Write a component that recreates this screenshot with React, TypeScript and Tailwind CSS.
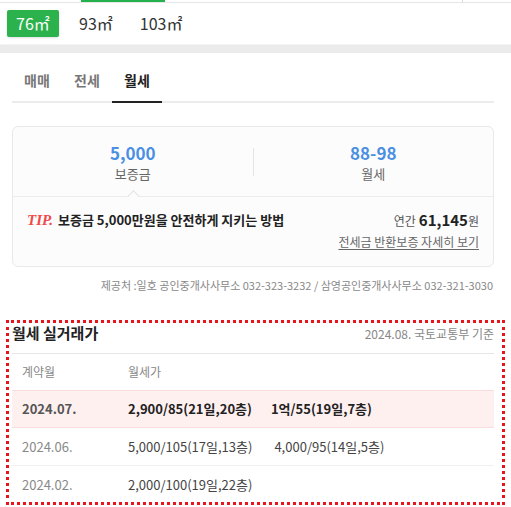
import React from 'react';

const font = { fontFamily: '"Noto Sans CJK KR", "Noto Sans", sans-serif' };

const AreaTabs: React.FC = () => (
  <div className="flex items-start h-[41px] pt-[7px] pl-[7px]">
    <button className="h-[27px] w-[52px] rounded-[2px] bg-[#2bb24c] text-white text-[16px] leading-[27px] shadow-sm">
      76㎡
    </button>
    <span className="ml-[20px] text-[16px] leading-[27px] text-[#333]">93㎡</span>
    <span className="ml-[27px] text-[16px] leading-[27px] text-[#333]">103㎡</span>
  </div>
);

const DealTabs: React.FC = () => {
  const tabs = ['매매', '전세', '월세'];
  return (
    <div className="ml-[12px] mr-[17px] h-[50px] flex border-b-2 border-[#ececec]">
      {tabs.map((t) => (
        <div
          key={t}
          className={
            t === '월세'
              ? 'w-[50px] flex items-center justify-center pt-[6px] -mb-[2px] border-b-2 border-[#222] text-[14px] font-bold text-[#222]'
              : 'w-[50px] flex items-center justify-center pt-[6px] text-[14px] font-bold text-[#777]'
          }
        >
          {t}
        </div>
      ))}
    </div>
  );
};

const PriceCard: React.FC = () => (
  <div className="mt-[23px] ml-[12px] mr-[17px] h-[141px] rounded-[6px] border border-[#e9e9ec] bg-[#fcfcfd] flex flex-col">
    <div className="relative h-[70px] flex items-center border-b border-[#ececee]">
      <div className="flex-1 flex flex-col items-center pt-[2px]">
        <span className="text-[17px] leading-[22px] font-semibold text-[#4b8fe2]">5,000</span>
        <span className="text-[13px] leading-[20px] text-[#666]">보증금</span>
      </div>
      <div className="w-px h-[28px] bg-[#e4e4e6]" />
      <div className="flex-1 flex flex-col items-center pt-[2px]">
        <span className="text-[17px] leading-[22px] font-semibold text-[#4b8fe2]">88-98</span>
        <span className="text-[13px] leading-[20px] text-[#666]">월세</span>
      </div>
      <span className="absolute left-[116px] -bottom-[5px] w-[9px] h-[9px] rotate-45 bg-[#fcfcfd] border-l border-t border-[#e2e2e5]" />
    </div>
    <div className="flex flex-col px-[14px] pt-[13px]">
      <div className="flex items-center justify-between h-[20px]">
        <div className="flex items-center">
          <span className="text-[15px] font-bold italic text-[#f04a4a]" style={{ fontFamily: '"Liberation Serif", serif' }}>
            TIP.
          </span>
          <span className="ml-[5px] text-[13px] font-bold text-[#222]">보증금 5,000만원을 안전하게 지키는 방법</span>
        </div>
        <div className="flex items-baseline">
          <span className="text-[12px] text-[#555]">연간</span>
          <span className="ml-[3px] text-[15px] font-bold text-[#222]">61,145</span>
          <span className="text-[12px] text-[#555]">원</span>
        </div>
      </div>
      <div className="flex justify-end mt-[3px]">
        <span className="text-[12px] leading-[18px] text-[#666] underline underline-offset-2">전세금 반환보증 자세히 보기</span>
      </div>
    </div>
  </div>
);

const rows = [
  { month: '2024.07.', items: ['2,900/85(21일,20층)', '1억/55(19일,7층)'], hot: true },
  { month: '2024.06.', items: ['5,000/105(17일,13층)', '4,000/95(14일,5층)'], hot: false },
  { month: '2024.02.', items: ['2,000/100(19일,22층)'], hot: false },
];

const RealDeals: React.FC = () => (
  <div className="mt-[27px] ml-[6px] mr-[6px] h-[185px] overflow-hidden border-[3px] border-dotted border-[#e8141b] pl-[3px] pr-[8px]">
    <div className="flex items-start justify-between h-[31px] border-b border-[#e6e6e6]">
      <span className="text-[15px] leading-[20px] font-bold text-[#222]">월세 실거래가</span>
      <span className="text-[12px] leading-[22px] text-[#888]">2024.08. 국토교통부 기준</span>
    </div>
    <div className="flex items-center h-[36px] text-[12px] text-[#888]">
      <span className="w-[116px] pl-[10px]">계약월</span>
      <span>월세가</span>
    </div>
    {rows.map((r) => (
      <div
        key={r.month}
        className={
          r.hot
            ? 'flex items-center h-[38px] bg-[#fff0f0] border-t border-b border-[#fbdcdc] text-[13px]'
            : 'flex items-center h-[38px] border-b border-[#f0f0f0] text-[13px]'
        }
      >
        <span className={r.hot ? 'w-[116px] pl-[10px] font-bold text-[#555]' : 'w-[116px] pl-[10px] text-[#888]'}>
          {r.month}
        </span>
        {r.items.map((it) => (
          <span key={it} className={r.hot ? 'mr-[19px] font-bold text-[#222]' : 'mr-[22px] text-[#444]'}>
            {it}
          </span>
        ))}
      </div>
    ))}
  </div>
);

export default function App() {
  return (
    <div className="w-[511px] h-[507px] overflow-hidden bg-white" style={font}>
      <div className="h-[3px] border-b border-[#e6e6e6] flex">
        <div className="ml-[81px] w-[84px] h-[2px] bg-[#22b14c]" />
        <div className="ml-[297px] w-px h-[3px] bg-[#dcdcdc]" />
      </div>
      <AreaTabs />
      <div className="h-[9px] bg-[#ebebec] border-t border-[#f3f3f3]" />
      <DealTabs />
      <PriceCard />
      <div className="mt-[10px] mr-[18px] text-right text-[11px] leading-[16px] text-[#888]">
        제공처 :일호 공인중개사사무소 032-323-3232 / 삼영공인중개사사무소 032-321-3030
      </div>
      <RealDeals />
    </div>
  );
}
